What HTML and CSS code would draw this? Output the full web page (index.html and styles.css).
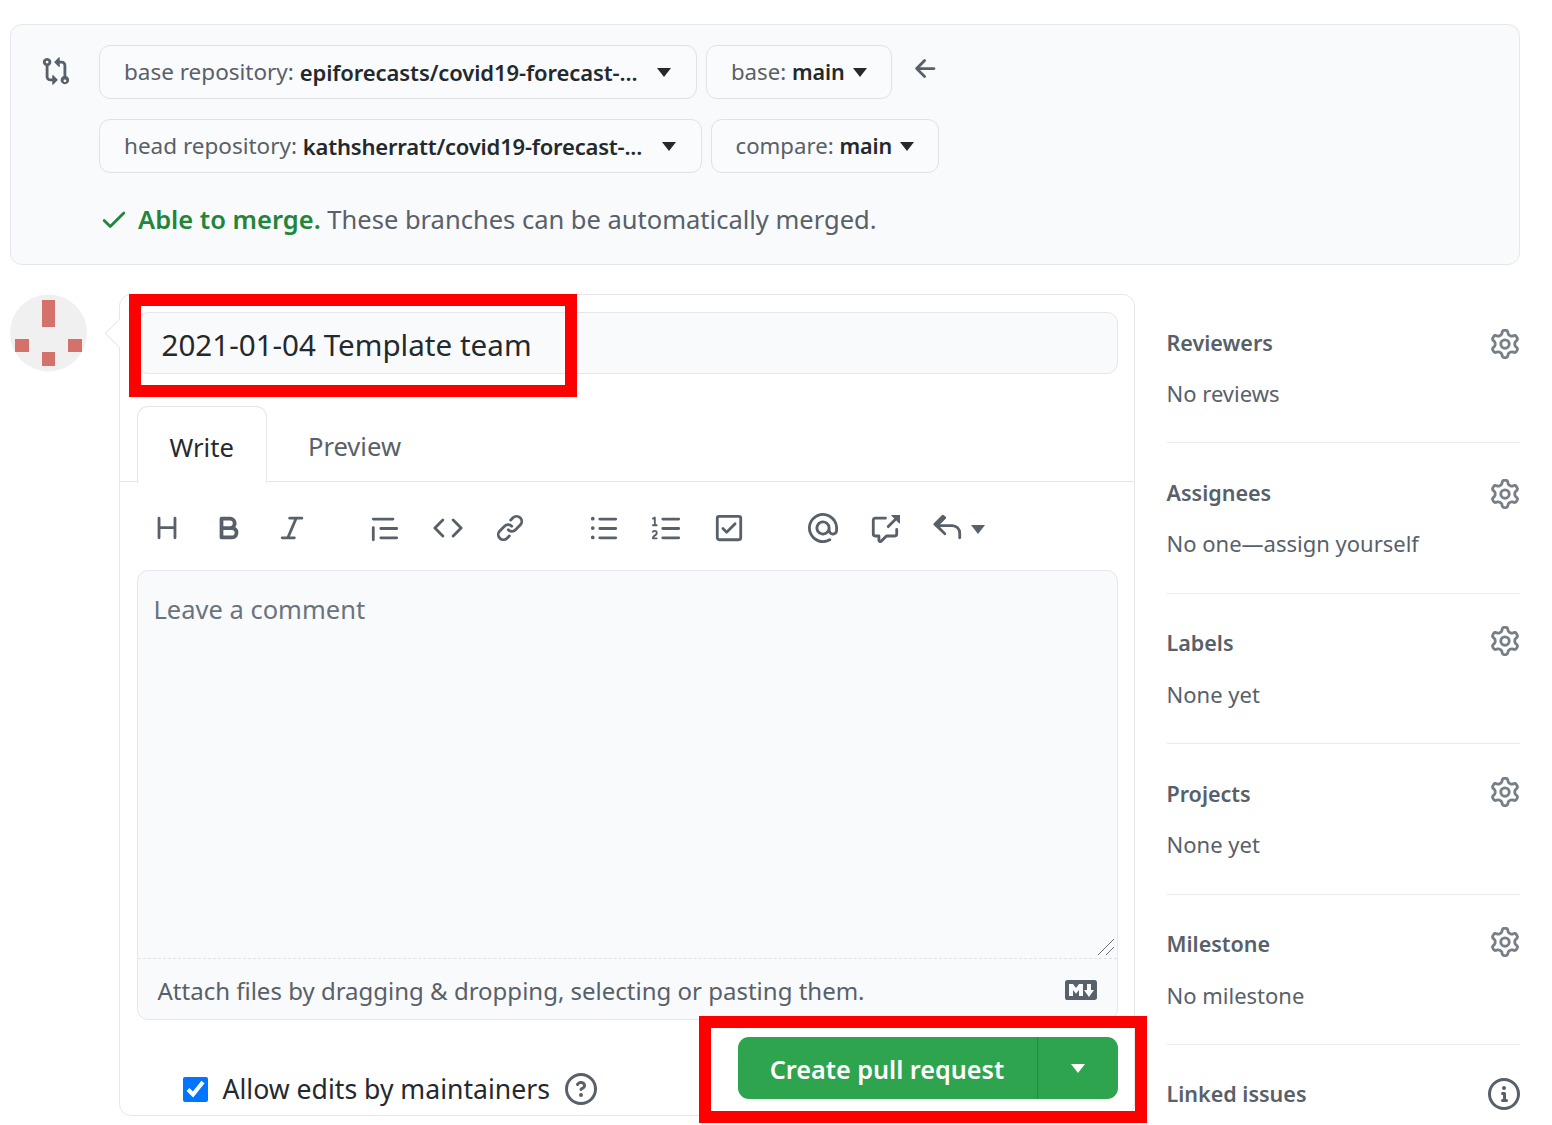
FILE: index.html
```html
<!DOCTYPE html>
<html lang="en">
<head>
    <meta charset="UTF-8">
    <meta name="viewport" content="width=device-width, initial-scale=1.0">
    <title>Open a pull request</title>
    <link rel="stylesheet" href="styles.css">
</head>
<body>
    <svg class="sprite" xmlns="http://www.w3.org/2000/svg">
        <symbol id="i-gear" viewBox="0 0 16 16"><path fill-rule="evenodd" d="M7.429 1.525a6.593 6.593 0 011.142 0c.036.003.108.036.137.146l.289 1.105c.147.56.55.967.997 1.189.174.086.341.183.501.29.417.278.97.423 1.53.27l1.102-.303c.11-.03.175.016.195.046.219.31.41.641.573.989.014.031.022.11-.059.19l-.815.806c-.411.406-.562.957-.53 1.456a4.588 4.588 0 010 .582c-.032.499.119 1.05.53 1.456l.815.806c.08.08.073.159.059.19a6.494 6.494 0 01-.573.99c-.02.029-.086.074-.195.045l-1.103-.303c-.559-.153-1.112-.008-1.529.27-.16.107-.327.204-.5.29-.449.222-.851.628-.998 1.189l-.289 1.105c-.029.11-.101.143-.137.146a6.613 6.613 0 01-1.142 0c-.036-.003-.108-.037-.137-.146l-.289-1.105c-.147-.56-.55-.967-.997-1.189a4.502 4.502 0 01-.501-.29c-.417-.278-.97-.423-1.53-.27l-1.102.303c-.11.03-.175-.016-.195-.046a6.492 6.492 0 01-.573-.989c-.014-.031-.022-.11.059-.19l.815-.806c.411-.406.562-.957.53-1.456a4.587 4.587 0 010-.582c.032-.499-.119-1.05-.53-1.456l-.815-.806c-.08-.08-.073-.159-.059-.19a6.44 6.44 0 01.573-.99c.02-.029.086-.075.195-.045l1.103.303c.559.153 1.112.008 1.529-.27.16-.107.327-.204.5-.29.449-.222.851-.628.998-1.189l.289-1.105c.029-.11.101-.143.137-.146zM8 0c-.236 0-.47.01-.701.03-.743.065-1.29.615-1.458 1.261l-.29 1.106c-.017.066-.078.158-.211.224a5.994 5.994 0 00-.668.386c-.123.082-.233.09-.3.071L3.27 2.776c-.644-.177-1.392.02-1.82.63a7.977 7.977 0 00-.704 1.217c-.315.675-.111 1.422.363 1.891l.815.806c.05.048.098.147.088.294a6.084 6.084 0 000 .772c.01.147-.038.246-.088.294l-.815.806c-.474.469-.678 1.216-.363 1.891.2.428.436.835.704 1.218.428.609 1.176.806 1.82.63l1.103-.303c.066-.019.176-.011.299.071.213.143.436.272.668.386.133.066.194.158.212.224l.289 1.106c.169.646.715 1.196 1.458 1.26a8.094 8.094 0 001.402 0c.743-.064 1.29-.614 1.458-1.26l.29-1.106c.017-.066.078-.158.211-.224a5.98 5.98 0 00.668-.386c.123-.082.233-.09.3-.071l1.102.302c.644.177 1.392-.02 1.82-.63.268-.382.505-.789.704-1.217.315-.675.111-1.422-.364-1.891l-.814-.806c-.05-.048-.098-.147-.088-.294a6.1 6.1 0 000-.772c-.01-.147.039-.246.088-.294l.814-.806c.475-.469.679-1.216.364-1.891a7.992 7.992 0 00-.704-1.218c-.428-.609-1.176-.806-1.82-.63l-1.103.303c-.066.019-.176.011-.299-.071a5.991 5.991 0 00-.668-.386c-.133-.066-.194-.158-.212-.224L10.16 1.29C9.99.645 9.444.095 8.701.031A8.094 8.094 0 008 0zm1.5 8a1.5 1.5 0 11-3 0 1.5 1.5 0 013 0zM11 8a3 3 0 11-6 0 3 3 0 016 0z"/></symbol>
    </svg>

    <div class="page">
        <div class="compare-box">
            <svg class="icon compare-icon" viewBox="0 0 16 16"><path fill-rule="evenodd" d="M9.573.677L7.177 3.073a.25.25 0 000 .354l2.396 2.396A.25.25 0 0010 5.646V4h1a1 1 0 011 1v5.628a2.251 2.251 0 101.5 0V5A2.5 2.5 0 0011 2.5h-1V.854a.25.25 0 00-.427-.177zM6 12v-1.646a.25.25 0 01.427-.177l2.396 2.396a.25.25 0 010 .354l-2.396 2.396A.25.25 0 016 15.146V13.5H5A2.5 2.5 0 012.5 11V5.372a2.25 2.25 0 111.5 0V11a1 1 0 001 1h1zm6.75.5a.75.75 0 100 1.5.75.75 0 000-1.5zM3.25 2.5a.75.75 0 100 1.5.75.75 0 000-1.5z"/></svg>
            <div class="compare-rows">
                <div class="range-row">
                    <div class="range-btn repo-btn">base repository: <b>epiforecasts/covid19-forecast-...</b><i class="caret"></i></div>
                    <div class="range-btn ref-btn">base: <b>main</b><i class="caret"></i></div>
                    <svg class="icon arrow-icon" viewBox="0 0 16 16"><path fill-rule="evenodd" d="M7.78 12.53a.75.75 0 01-1.06 0L2.47 8.28a.75.75 0 010-1.06l4.25-4.25a.75.75 0 011.06 1.06L4.81 7h7.44a.75.75 0 010 1.5H4.81l2.97 2.97a.75.75 0 010 1.06z"/></svg>
                </div>
                <div class="range-row">
                    <div class="range-btn repo-btn head-btn">head repository: <b>kathsherratt/covid19-forecast-...</b><i class="caret"></i></div>
                    <div class="range-btn ref-btn">compare: <b>main</b><i class="caret"></i></div>
                </div>
                <div class="merge-status">
                    <svg class="icon check-icon" viewBox="0 0 16 16"><path fill-rule="evenodd" d="M13.78 4.22a.75.75 0 010 1.06l-7.25 7.25a.75.75 0 01-1.06 0L2.22 9.28a.75.75 0 011.06-1.06L6 10.94l6.72-6.72a.75.75 0 011.06 0z"/></svg>
                    <span><span class="merge-ok">Able to merge.</span> These branches can be automatically merged.</span>
                </div>
            </div>
        </div>

        <div class="discussion">
            <svg class="avatar" viewBox="0 0 78 78">
                <circle cx="38.5" cy="39" r="38.5" fill="#f0f0f0"/>
                <g fill="#d4716a">
                    <rect x="32" y="6" width="13" height="27"/>
                    <rect x="5" y="45" width="14" height="13"/>
                    <rect x="58" y="45" width="14" height="13"/>
                    <rect x="32" y="58" width="13" height="14"/>
                </g>
            </svg>

            <div class="form-card">
                <div class="title-input">2021-01-04 Template team</div>

                <div class="tabs">
                    <div class="tab active">Write</div>
                    <div class="tab">Preview</div>
                </div>

                <div class="toolbar">
                    <div class="tool-group">
                        <svg class="icon" viewBox="0 0 16 16"><path fill-rule="evenodd" d="M3.75 2a.75.75 0 01.75.75V7h7V2.75a.75.75 0 011.5 0v10.5a.75.75 0 01-1.5 0V8.5h-7v4.75a.75.75 0 01-1.5 0V2.75A.75.75 0 013.75 2z"/></svg>
                        <svg class="icon" viewBox="0 0 16 16"><path fill-rule="evenodd" d="M4 2a1 1 0 00-1 1v10a1 1 0 001 1h5.5a3.5 3.5 0 001.852-6.47A3.5 3.5 0 008.5 2H4zm4.5 5a1.5 1.5 0 100-3H5v3h3.5zM5 9v3h4.5a1.5 1.5 0 000-3H5z"/></svg>
                        <svg class="icon" viewBox="0 0 16 16"><path fill-rule="evenodd" d="M6 2.75A.75.75 0 016.75 2h6.5a.75.75 0 010 1.5h-2.505l-3.858 9H9.25a.75.75 0 010 1.5h-6.5a.75.75 0 010-1.5h2.505l3.858-9H6.75A.75.75 0 016 2.75z"/></svg>
                    </div>
                    <div class="tool-group">
                        <svg class="icon" viewBox="0 0 16 16"><path fill-rule="evenodd" d="M1.75 2.5a.75.75 0 000 1.5h10.5a.75.75 0 000-1.5H1.75zm4 5a.75.75 0 000 1.5h8.5a.75.75 0 000-1.5h-8.5zm0 5a.75.75 0 000 1.5h8.5a.75.75 0 000-1.5h-8.5zM2.5 7.75a.75.75 0 00-1.5 0v6.5a.75.75 0 001.5 0v-6.5z"/></svg>
                        <svg class="icon" viewBox="0 0 16 16"><path fill-rule="evenodd" d="M4.72 3.22a.75.75 0 011.06 1.06L2.06 8l3.72 3.72a.75.75 0 11-1.06 1.06L.47 8.53a.75.75 0 010-1.06l4.25-4.25zm6.56 0a.75.75 0 10-1.06 1.06L13.94 8l-3.72 3.72a.75.75 0 101.06 1.06l4.25-4.25a.75.75 0 000-1.06l-4.25-4.25z"/></svg>
                        <svg class="icon" viewBox="0 0 16 16"><path fill-rule="evenodd" d="M7.775 3.275a.75.75 0 001.06 1.06l1.25-1.25a2 2 0 112.83 2.83l-2.5 2.5a2 2 0 01-2.83 0 .75.75 0 00-1.06 1.06 3.5 3.5 0 004.95 0l2.5-2.5a3.5 3.5 0 00-4.95-4.95l-1.25 1.25zm-4.69 9.64a2 2 0 010-2.83l2.5-2.5a2 2 0 012.83 0 .75.75 0 001.06-1.06 3.5 3.5 0 00-4.95 0l-2.5 2.5a3.5 3.5 0 004.95 4.95l1.25-1.25a.75.75 0 00-1.06-1.06l-1.25 1.25a2 2 0 01-2.83 0z"/></svg>
                    </div>
                    <div class="tool-group">
                        <svg class="icon" viewBox="0 0 16 16"><path fill-rule="evenodd" d="M2 4a1 1 0 100-2 1 1 0 000 2zm3.75-1.5a.75.75 0 000 1.5h8.5a.75.75 0 000-1.5h-8.5zm0 5a.75.75 0 000 1.5h8.5a.75.75 0 000-1.5h-8.5zm0 5a.75.75 0 000 1.5h8.5a.75.75 0 000-1.5h-8.5zM3 8a1 1 0 11-2 0 1 1 0 012 0zm-1 6a1 1 0 100-2 1 1 0 000 2z"/></svg>
                        <svg class="icon" viewBox="0 0 16 16"><path fill-rule="evenodd" d="M2.003 2.5a.5.5 0 00-.723-.447l-1.003.5a.5.5 0 00.446.895l.28-.14V6H.5a.5.5 0 000 1h2.006a.5.5 0 100-1h-.503V2.5zM5 3.25a.75.75 0 01.75-.75h8.5a.75.75 0 010 1.5h-8.5A.75.75 0 015 3.25zm0 5a.75.75 0 01.75-.75h8.5a.75.75 0 010 1.5h-8.5A.75.75 0 015 8.25zm0 5a.75.75 0 01.75-.75h8.5a.75.75 0 010 1.5h-8.5a.75.75 0 01-.75-.75zM.924 10.32l.003-.004a.851.851 0 01.144-.153A.66.66 0 011.5 10c.195 0 .306.068.374.146a.57.57 0 01.128.376c0 .453-.269.682-.8 1.078l-.035.025C.692 11.98 0 12.495 0 13.5a.5.5 0 00.5.5h2.003a.5.5 0 000-1H1.146c.132-.197.351-.372.654-.597l.047-.035c.47-.35 1.156-.858 1.156-1.845 0-.365-.118-.744-.377-1.038-.268-.303-.658-.484-1.126-.484-.48 0-.84.202-1.068.392a1.858 1.858 0 00-.348.384l-.007.011-.002.004-.001.002-.001.001a.5.5 0 00.851.525z"/></svg>
                        <svg class="icon" viewBox="0 0 16 16"><path fill-rule="evenodd" d="M2.5 2.75a.25.25 0 01.25-.25h10.5a.25.25 0 01.25.25v10.5a.25.25 0 01-.25.25H2.75a.25.25 0 01-.25-.25V2.75zM2.75 1A1.75 1.75 0 001 2.75v10.5c0 .966.784 1.75 1.75 1.75h10.5A1.75 1.75 0 0015 13.25V2.75A1.75 1.75 0 0013.25 1H2.75zm9.03 5.28a.75.75 0 00-1.06-1.06L6.75 9.19 5.28 7.72a.75.75 0 00-1.06 1.06l2 2a.75.75 0 001.06 0l4.5-4.5z"/></svg>
                    </div>
                    <div class="tool-group">
                        <svg class="icon" viewBox="0 0 16 16"><path fill-rule="evenodd" d="M4.75 2.37a6.5 6.5 0 006.5 11.26.75.75 0 01.75 1.298 8 8 0 113.994-7.273.754.754 0 01.006.095v1.5a2.75 2.75 0 01-5.072 1.475A4 4 0 1112 8v1.25a1.25 1.25 0 002.5 0V7.867a6.5 6.5 0 00-9.75-5.496V2.37zM10.5 8a2.5 2.5 0 10-5 0 2.5 2.5 0 005 0z"/></svg>
                        <svg class="icon" viewBox="0 0 16 16"><path fill-rule="evenodd" d="M16 1.25v4.146a.25.25 0 01-.427.177L14.03 4.03l-3.75 3.75a.75.75 0 11-1.06-1.06l3.75-3.75-1.543-1.543A.25.25 0 0111.604 1h4.146a.25.25 0 01.25.25zM2.75 3.5a.25.25 0 00-.25.25v7.5c0 .138.112.25.25.25h2a.75.75 0 01.75.75v2.19l2.72-2.72a.75.75 0 01.53-.22h4.5a.25.25 0 00.25-.25v-2.5a.75.75 0 111.5 0v2.5A1.75 1.75 0 0113.25 13H9.06l-2.573 2.573A1.457 1.457 0 014 14.543V13H2.75A1.75 1.75 0 011 11.25v-7.5C1 2.784 1.784 2 2.75 2h5.5a.75.75 0 010 1.5h-5.5z"/></svg>
                        <div class="reply-tool">
                            <svg class="icon" viewBox="0 0 16 16"><path fill-rule="evenodd" d="M6.78 1.97a.75.75 0 010 1.06L3.81 6h6.44A4.75 4.75 0 0115 10.75v2.5a.75.75 0 01-1.5 0v-2.5a3.25 3.25 0 00-3.25-3.25H3.81l2.97 2.97a.75.75 0 11-1.06 1.06L.47 6.53a.75.75 0 010-1.06l4.25-4.25a.75.75 0 011.06 0z"/></svg>
                            <i class="caret"></i>
                        </div>
                    </div>
                </div>

                <div class="editor">
                    <div class="comment-area">
                        Leave a comment
                        <svg class="resize-grip" viewBox="0 0 18 18"><path d="M1 17L17 1M9 17l8-8" stroke="#6a737d" stroke-width="1" fill="none"/></svg>
                    </div>
                    <div class="attach-bar">
                        Attach files by dragging &amp; dropping, selecting or pasting them.
                        <svg class="icon md-icon" viewBox="0 0 16 16"><path fill-rule="evenodd" d="M14.85 3H1.15C.52 3 0 3.52 0 4.15v7.69C0 12.48.52 13 1.15 13h13.69c.64 0 1.15-.52 1.15-1.15v-7.7C16 3.52 15.48 3 14.85 3zM9 11H7V8L5.5 9.92 4 8v3H2V5h2l1.5 2L7 5h2v6zm2.99.5L9.5 8H11V5h2v3h1.5l-2.51 3.5z"/></svg>
                    </div>
                </div>

                <div class="form-footer">
                    <label class="allow-edits">
                        <input type="checkbox" checked>
                        Allow edits by maintainers
                        <svg class="icon help-icon" viewBox="0 0 16 16"><path fill-rule="evenodd" d="M8 1.5a6.5 6.5 0 100 13 6.5 6.5 0 000-13zM0 8a8 8 0 1116 0A8 8 0 010 8zm9 3a1 1 0 11-2 0 1 1 0 012 0zM6.92 6.085c.081-.16.19-.299.34-.398.145-.097.371-.187.74-.187.28 0 .553.087.738.225A.613.613 0 019 6.25c0 .177-.04.264-.077.318a.956.956 0 01-.277.245c-.076.051-.158.1-.258.161l-.007.004a7.728 7.728 0 00-.313.195 2.416 2.416 0 00-.692.661.75.75 0 001.248.832.956.956 0 01.276-.245 6.3 6.3 0 01.26-.16l.006-.004c.093-.057.204-.123.313-.195.222-.149.487-.355.692-.662.214-.32.329-.702.329-1.15 0-.76-.36-1.348-.863-1.725A2.76 2.76 0 008 4c-.631 0-1.155.16-1.572.438-.413.276-.68.638-.849.977a.75.75 0 101.342.67z"/></svg>
                    </label>
                    <div class="create-btn">
                        <span class="create-label">Create pull request</span>
                        <span class="create-more"><i class="caret"></i></span>
                    </div>
                </div>
            </div>

            <div class="sidebar">
                <div class="side-item">
                    <div class="side-head">Reviewers<svg class="gear"><use href="#i-gear"/></svg></div>
                    <div class="side-note">No reviews</div>
                </div>
                <div class="side-item">
                    <div class="side-head">Assignees<svg class="gear"><use href="#i-gear"/></svg></div>
                    <div class="side-note">No one—assign yourself</div>
                </div>
                <div class="side-item">
                    <div class="side-head">Labels<svg class="gear gear-up"><use href="#i-gear"/></svg></div>
                    <div class="side-note">None yet</div>
                </div>
                <div class="side-item">
                    <div class="side-head">Projects<svg class="gear gear-up"><use href="#i-gear"/></svg></div>
                    <div class="side-note">None yet</div>
                </div>
                <div class="side-item">
                    <div class="side-head">Milestone<svg class="gear gear-up"><use href="#i-gear"/></svg></div>
                    <div class="side-note">No milestone</div>
                </div>
                <div class="side-item last">
                    <div class="side-head">Linked issues
                        <svg class="icon info-icon" viewBox="0 0 16 16"><path fill-rule="evenodd" d="M8 1.5a6.5 6.5 0 100 13 6.5 6.5 0 000-13zM0 8a8 8 0 1116 0A8 8 0 010 8zm6.5-.25A.75.75 0 017.25 7h1a.75.75 0 01.75.75v2.75h.25a.75.75 0 010 1.5h-2a.75.75 0 010-1.5h.25v-2h-.25a.75.75 0 01-.75-.75zM8 6a1 1 0 100-2 1 1 0 000 2z"/></svg>
                    </div>
                </div>
            </div>
        </div>
    </div>

    <div class="mark mark-title"></div>
    <div class="mark mark-button"></div>
</body>
</html>
```

FILE: styles.css
```css
* {
    box-sizing: border-box;
    margin: 0;
    padding: 0;
}
html, body {
    height: 100%;
    overflow: hidden;
}
body {
    background-color: #fff;
    color: #24292e;
    font-family: "Noto Sans", "Open Sans", sans-serif;
    font-size: 24px;
    position: relative;
}
.sprite {
    display: none;
}
.icon {
    display: block;
    fill: #586069;
    flex: none;
    height: 30px;
    width: 30px;
}
.caret {
    border-left: 7.5px solid transparent;
    border-right: 7.5px solid transparent;
    border-top: 9px solid #24292e;
    display: inline-block;
    flex: none;
}
.page {
    padding: 24px 32px 0 10px;
}

/* compare box */
.compare-box {
    background-color: #f9fafc;
    border: 1.5px solid #e4e7eb;
    border-radius: 12px;
    display: flex;
    height: 241px;
    padding: 20px 0 0 30px;
}
.compare-icon {
    margin: 11px 28px 0 0;
}
.compare-rows {
    display: flex;
    flex-direction: column;
    gap: 20px;
}
.range-row {
    align-items: center;
    display: flex;
    gap: 9px;
}
.range-btn {
    align-items: center;
    background-color: #fafbfc;
    border: 1.5px solid #dfe2e6;
    border-radius: 11px;
    color: #586069;
    display: flex;
    font-size: 22.5px;
    height: 54px;
    line-height: 50px;
    padding: 0 24.5px 0 24px;
    white-space: pre;
}
.range-btn b {
    color: #24292e;
    font-size: 22px;
    font-weight: 600;
    letter-spacing: -.1px;
}
.range-btn .caret {
    margin-left: 8px;
}
.repo-btn .caret {
    margin-left: 20px;
}
.head-btn b {
    letter-spacing: -.2px;
}
.ref-btn {
    font-size: 22.2px;
    padding: 0 24px;
}
.ref-btn b {
    font-size: 21.5px;
}
.arrow-icon {
    margin: -6px 0 0 10px;
}
.merge-status {
    align-items: center;
    color: #586069;
    display: flex;
    font-size: 25.5px;
    margin-top: 9px;
    white-space: pre;
}
.merge-ok {
    color: #22863a;
    font-weight: 600;
}
.check-icon {
    fill: #22863a;
    margin-right: 9px;
}

/* main column */
.discussion {
    display: flex;
    margin-top: 29px;
}
.avatar {
    flex: none;
    height: 78px;
    margin-right: 31px;
    width: 78px;
}
.form-card {
    background-color: #fff;
    border: 1.5px solid #e4e7eb;
    border-radius: 12px;
    flex: none;
    height: 822px;
    padding: 17px 16px 0 16.5px;
    position: relative;
    width: 1015.5px;
}
.form-card::before {
    background-color: #fff;
    border-bottom: 1.5px solid #e4e7eb;
    border-left: 1.5px solid #e4e7eb;
    content: "";
    height: 20px;
    left: -11px;
    position: absolute;
    top: 28px;
    transform: rotate(45deg);
    width: 20px;
}
.title-input {
    background-color: #f9fafc;
    border: 1.5px solid #e4e7eb;
    border-radius: 11px;
    font-size: 29.6px;
    height: 62px;
    line-height: 63px;
    padding-left: 24px;
}
.tabs {
    border-bottom: 1.5px solid #e4e7eb;
    display: flex;
    height: 76px;
    margin: 32px -16px 0 -16.5px;
    padding-left: 16.5px;
}
.tab {
    color: #586069;
    font-size: 25.6px;
    height: 76px;
    line-height: 82px;
    padding: 0 40px 0 41px;
}
.tab.active {
    background-color: #fff;
    border: 1.5px solid #e4e7eb;
    border-bottom: 0;
    border-radius: 11px 11px 0 0;
    color: #24292e;
    height: 77px;
    padding: 0 32px;
}
.toolbar {
    align-items: center;
    display: flex;
    gap: 63.6px;
    height: 88px;
    padding: 4px 0 0 15px;
}
.tool-group {
    align-items: center;
    display: flex;
    gap: 32.6px;
}
.reply-tool {
    align-items: center;
    display: flex;
    gap: 8px;
}
.reply-tool .caret {
    border-top-color: #586069;
    margin-top: 3px;
}
.editor {
    background-color: #f9fafc;
    border: 1.5px solid #e4e7eb;
    border-radius: 11px;
    height: 450px;
}
.comment-area {
    border-bottom: 1.5px dashed #dfe2e6;
    color: #6a737d;
    font-size: 25.5px;
    height: 388px;
    line-height: 36px;
    padding: 20px 16px;
    position: relative;
}
.resize-grip {
    bottom: 2px;
    height: 18px;
    position: absolute;
    right: 2px;
    width: 18px;
}
.attach-bar {
    align-items: center;
    color: #586069;
    display: flex;
    font-size: 24px;
    height: 60px;
    justify-content: space-between;
    padding: 2px 20px 0;
}
.md-icon {
    height: 32px;
    width: 32px;
}
.form-footer {
    display: flex;
    justify-content: space-between;
    margin-top: 17px;
}
.allow-edits {
    align-items: center;
    align-self: flex-end;
    display: flex;
    font-size: 26.6px;
    margin: 0 0 -8px 46px;
}
.allow-edits input {
    accent-color: #0075ff;
    height: 25px;
    margin-right: 15px;
    width: 25px;
}
.help-icon {
    height: 32px;
    margin-left: 15px;
    width: 32px;
}
.create-btn {
    background-color: #2ea44f;
    border-radius: 11px;
    color: #fff;
    display: flex;
    font-size: 25.2px;
    font-weight: 600;
    height: 62px;
    line-height: 64px;
    width: 380px;
}
.create-label {
    border-right: 1.5px solid #26893f;
    text-align: center;
    width: 300px;
}
.create-more {
    align-items: center;
    display: flex;
    flex: 1;
    justify-content: center;
}
.create-more .caret {
    border-top-color: #fff;
}

/* sidebar */
.sidebar {
    flex: none;
    margin-left: 32px;
    padding-top: 31px;
    width: 353.5px;
}
.side-item {
    border-bottom: 1.5px solid #e9ebee;
    color: #586069;
    height: 118.4px;
    margin-bottom: 32px;
}
.side-item.last {
    border-bottom: 0;
    height: auto;
    margin-bottom: 0;
}
.side-head {
    align-items: center;
    display: flex;
    font-size: 21.5px;
    font-weight: 600;
    height: 34px;
    justify-content: space-between;
}
.gear {
    fill: #767e86;
    height: 30px;
    margin-top: 3px;
    width: 30px;
}
.gear-up {
    margin-top: -3px;
}
.info-icon {
    height: 32px;
    width: 32px;
}
.side-note {
    font-size: 22px;
    line-height: 34px;
    margin-top: 17px;
}

/* red annotations drawn over the screenshot */
.mark {
    border: 12px solid #f00;
    pointer-events: none;
    position: absolute;
}
.mark-title {
    height: 103px;
    left: 129px;
    top: 294px;
    width: 448px;
}
.mark-button {
    height: 107px;
    left: 699px;
    top: 1016px;
    width: 448px;
}
```
